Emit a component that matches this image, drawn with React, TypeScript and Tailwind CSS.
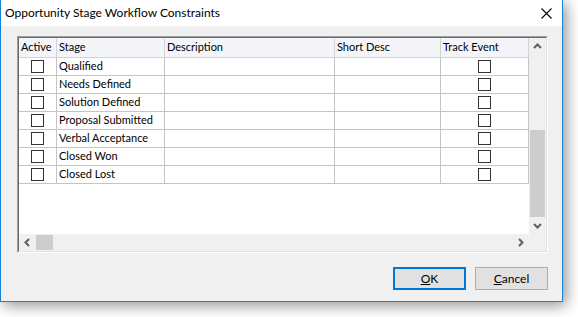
import React from "react";

const stages = [
  "Qualified",
  "Needs Defined",
  "Solution Defined",
  "Proposal Submitted",
  "Verbal Acceptance",
  "Closed Won",
  "Closed Lost",
];

function Box() {
  return <div className="w-[13px] h-[13px] border border-[#333333] bg-white" />;
}

function Chevron({ dir }: { dir: "up" | "down" | "left" | "right" }) {
  const pts = {
    up: "1,6 4.5,2.5 8,6",
    down: "1,3 4.5,6.5 8,3",
    left: "6,1 2.5,4.5 6,8",
    right: "3,1 6.5,4.5 3,8",
  }[dir];
  return (
    <svg width="9" height="9" viewBox="0 0 9 9">
      <polyline points={pts} fill="none" stroke="#606060" strokeWidth="2" />
    </svg>
  );
}

export default function App() {
  const cell = "border-r border-b border-[#c4c4c4] flex items-center whitespace-nowrap overflow-hidden";
  return (
    <div className="w-[578px] h-[317px] bg-white overflow-hidden font-['Lato',sans-serif] text-black">
      <div className="w-[563px] h-[302px] flex flex-col border-l border-r border-b border-[#1883d7] shadow-[3px_3px_14px_rgba(0,0,0,0.45)]">
        {/* title bar */}
        <div className="h-[26px] bg-white flex items-center justify-between pl-[4px] pr-[10px]">
          <span className="text-[12px] leading-none whitespace-nowrap">Opportunity Stage Workflow Constraints</span>
          <svg width="11" height="11" viewBox="0 0 11 11">
            <path d="M0.5 0.5 L10.5 10.5 M10.5 0.5 L0.5 10.5" stroke="#000" strokeWidth="1.1" />
          </svg>
        </div>

        {/* body */}
        <div className="flex-1 bg-[#f0f0f0] pt-[10px] pl-[16px] pr-[14px] flex flex-col">
          <div className="w-[531px] h-[217px] border border-t-[#a0a0a0] border-l-[#a0a0a0] border-r-white border-b-white">
            <div className="h-full border border-t-[#696969] border-l-[#696969] border-r-[#e3e3e3] border-b-[#e3e3e3] flex flex-col text-[11px]">
              <div className="flex flex-1">
                <div className="w-[510px] bg-white flex flex-col">
                  <div className="grid grid-cols-[38px_108px_170px_106px_88px] h-[20px] bg-[#f3f5f9]">
                    {["Active", "Stage", "Description", "Short Desc", "Track Event"].map((h) => (
                      <div key={h} className="border-r border-b border-[#d2d4d8] flex items-center pl-[2px] whitespace-nowrap overflow-hidden">
                        {h}
                      </div>
                    ))}
                  </div>
                  {stages.map((s) => (
                    <div key={s} className="grid grid-cols-[38px_108px_170px_106px_88px] h-[18px]">
                      <div className={`${cell} justify-center`}>
                        <Box />
                      </div>
                      <div className={`${cell} pl-[2px]`}>{s}</div>
                      <div className={cell} />
                      <div className={cell} />
                      <div className={`${cell} justify-center`}>
                        <Box />
                      </div>
                    </div>
                  ))}
                </div>
                {/* vertical scrollbar */}
                <div className="w-[17px] bg-[#f0f0f0] flex flex-col">
                  <div className="h-[17px] flex items-center justify-center">
                    <Chevron dir="up" />
                  </div>
                  <div className="flex-1 flex flex-col justify-end items-center">
                    <div className="w-[15px] h-[87px] bg-[#cdcdcd]" />
                  </div>
                  <div className="h-[17px] flex items-center justify-center">
                    <Chevron dir="down" />
                  </div>
                </div>
              </div>
              {/* horizontal scrollbar */}
              <div className="h-[17px] bg-[#f0f0f0] flex">
                <div className="w-[17px] flex items-center justify-center">
                  <Chevron dir="left" />
                </div>
                <div className="flex-1 flex items-center">
                  <div className="w-[17px] h-[15px] bg-[#cdcdcd]" />
                </div>
                <div className="w-[17px] flex items-center justify-center">
                  <Chevron dir="right" />
                </div>
                <div className="w-[17px]" />
              </div>
            </div>
          </div>

          <div className="mt-[14px] flex justify-end gap-[9px] text-[12px]">
            <button className="w-[73px] h-[23px] bg-[#e1e1e1] border-2 border-[#0078d7] flex items-center justify-center">
              <span>
                <span className="underline">O</span>K
              </span>
            </button>
            <button className="w-[73px] h-[23px] bg-[#e1e1e1] border border-[#adadad] flex items-center justify-center">
              <span>
                <span className="underline">C</span>ancel
              </span>
            </button>
          </div>
        </div>
      </div>
    </div>
  );
}
